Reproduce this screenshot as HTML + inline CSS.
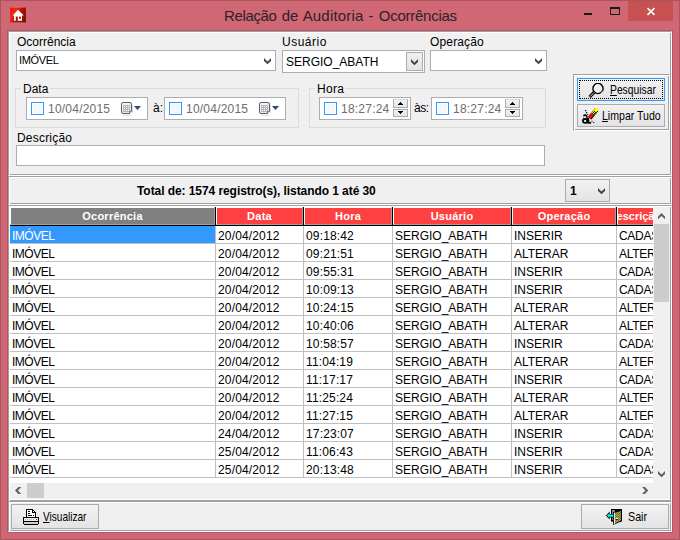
<!DOCTYPE html>
<html lang="pt-BR">
<head>
<meta charset="utf-8">
<title>Relação de Auditoria - Ocorrências</title>
<style>
*{box-sizing:border-box;margin:0;padding:0}
html,body{width:680px;height:540px;overflow:hidden}
body{background:#CF6775;font-family:"Liberation Sans",Arial,sans-serif;font-size:12px;color:#000;position:relative}
.win *{position:absolute}
.title span{position:static}
.win{position:absolute;left:0;top:0;width:680px;height:540px;background:#CF6775;box-shadow:inset 0 0 0 1px #A9545F}
.title{left:224px;top:6px;width:300px;text-align:left;font-size:15px;line-height:20px;color:#2E2226;white-space:nowrap}
.client{left:8px;top:31px;width:664px;height:501px;background:#F0F0F0}
.etch{border:1px solid;border-color:#A0A0A0 #fff #fff #A0A0A0;box-shadow:inset 1px 1px 0 #fff,inset -1px -1px 0 #A0A0A0}
.lbl{font-size:12px;line-height:14px;white-space:nowrap;color:#000}
.combo{background:#fff;border:1px solid #ABADB3;font-size:11px;line-height:18px;white-space:nowrap;letter-spacing:-0.35px}
.combo span{left:2px;top:0}
.grp{border:1px solid #DCDCDC}
.pick{background:#fff;border:1px solid #ABADB3;height:23px}
.pick .cb{left:4px;top:4px;width:13px;height:13px;border:1px solid #3399FF;background:#F3F8FE;box-shadow:inset 0 0 0 1px #fff}
.pick .tx{left:21px;top:3px;font-size:12px;line-height:16px;color:#6D6D6D;white-space:nowrap;letter-spacing:0.22px}
.btn{border:1px solid #ACACAC;background:linear-gradient(#F2F2F2,#E3E3E3);font-size:11px;white-space:nowrap;letter-spacing:-0.45px}
.btn .t{line-height:14px;font-size:12.2px;letter-spacing:0;transform:scaleX(.88);transform-origin:0 50%}
u{position:static!important;text-decoration:underline}
.row{left:0;width:643px;height:18px}
.c{top:0;height:18px;line-height:21px;font-size:12px;white-space:nowrap;overflow:hidden;padding-left:2px;background:#fff;border-right:1px solid #C0C0C0;border-bottom:1px solid #C0C0C0}
.c0{left:0;width:206px;letter-spacing:-0.5px}.c1{left:206px;width:88px;letter-spacing:.15px}.c2{left:294px;width:89px;letter-spacing:.15px}.c3{left:383px;width:119px}.c4{left:502px;width:105px}.c5{left:607px;width:36px;border-right:none;letter-spacing:-.3px}
.sel{background:#3399FF;color:#fff}
.h{top:0;height:18px;line-height:17px;font-size:11px;letter-spacing:.25px;font-weight:bold;color:#fff;text-align:center;background:#FF4040;white-space:nowrap;overflow:hidden;border:1px solid;border-color:#fff #A0A0A0 #A0A0A0 #fff}
.sb{background:#F0F0F0}
.th{background:#CDCDCD}
</style>
</head>
<body>
<div class="win">
  <div style="left:7px;top:30px;width:666px;height:503px;border:1px solid #B35763"></div>
  <!-- title bar -->
  <svg style="left:10px;top:7px" width="16" height="16" viewBox="0 0 16 16">
    <defs><linearGradient id="ig" x1="0" y1="0" x2="1" y2="0.6"><stop offset="0" stop-color="#D81A0C"/><stop offset="0.35" stop-color="#F02A18"/><stop offset="0.6" stop-color="#B01205"/><stop offset="1" stop-color="#861000"/></linearGradient></defs>
    <rect x="0" y="0" width="16" height="16" fill="url(#ig)"/>
    <path d="M0.5 0.5 H15.5 M0.5 15.5 H15.5" stroke="#D9A9A5" stroke-width="1" opacity=".4"/>
    <path d="M8 2.8 L13.8 8.6 L12 8.6 L12 13.8 L4 13.8 L4 8.6 L2.8 8.6 Z" fill="#fff"/>
    <rect x="5.8" y="9.6" width="2" height="4.2" fill="#A01008"/>
    <rect x="9" y="9.6" width="2" height="2.2" fill="#D81810"/>
  </svg>
  <div class="title"><span style="letter-spacing:-.35px">Relação</span> <span style="margin-left:1px">de</span> <span style="letter-spacing:.2px">Auditoria</span> <span style="margin-left:.8px">-</span> <span style="letter-spacing:-.26px;margin-left:1px">Ocorrências</span></div>
  <div style="left:584px;top:13px;width:8px;height:2px;background:#1a1a1a"></div>
  <div style="left:610px;top:7px;width:10px;height:8px;border:1px solid #1a1a1a;border-top-width:2px"></div>
  <div style="left:628px;top:1px;width:45px;height:20px;background:#C75050"></div>
  <svg style="left:646px;top:7px" width="10" height="9" viewBox="0 0 10 9"><path d="M1.5 1.2 L8.5 7.8 M8.5 1.2 L1.5 7.8" stroke="#fff" stroke-width="1.6" fill="none"/></svg>

  <div class="client">
    <!-- top filter panel -->
    <div class="etch" style="left:0;top:0;width:664px;height:145px"></div>

    <div class="lbl" style="left:9px;top:4px">Ocorrência</div>
    <div class="combo" style="left:8px;top:19px;width:260px;height:21px"><span>IMÓVEL</span>
      <svg style="left:247px;top:7px" width="7" height="7" viewBox="0 0 7 7"><path d="M0 0 L3.5 3.4 L7 0 L7 2.9 L3.5 6.3 L0 2.9 Z" fill="#444"/></svg>
    </div>

    <div class="lbl" style="left:274px;top:4px;letter-spacing:.5px">Usuário</div>
    <div class="combo" style="left:274px;top:19px;width:143px;height:23px;line-height:20px"><span style="font-size:12px;letter-spacing:0;left:3px;top:1px">SERGIO_ABATH</span>
      <div style="left:123px;top:1px;width:17px;height:19px;border:1px solid #ACACAC;background:linear-gradient(#F0F0F0,#E5E5E5)"></div>
      <svg style="left:128px;top:8px" width="7" height="7" viewBox="0 0 7 7"><path d="M0 0 L3.5 3.4 L7 0 L7 2.9 L3.5 6.3 L0 2.9 Z" fill="#444"/></svg>
    </div>

    <div class="lbl" style="left:422px;top:4px;letter-spacing:.15px">Operação</div>
    <div class="combo" style="left:422px;top:19px;width:117px;height:21px">
      <svg style="left:104px;top:7px" width="7" height="7" viewBox="0 0 7 7"><path d="M0 0 L3.5 3.4 L7 0 L7 2.9 L3.5 6.3 L0 2.9 Z" fill="#444"/></svg>
    </div>

    <!-- Data group -->
    <div class="grp" style="left:7px;top:57px;width:284px;height:40px"></div>
    <div class="lbl" style="left:13px;top:51px;background:#F0F0F0;padding:0 2px">Data</div>
    <div class="pick" style="left:18px;top:66px;width:122px">
      <div class="cb"></div><div class="tx">10/04/2015</div>
      <svg style="left:94px;top:4px" width="22" height="14" viewBox="0 0 22 14">
        <defs><linearGradient id="cg1" x1="0" y1="0" x2="1" y2="1"><stop offset="0" stop-color="#fff"/><stop offset="1" stop-color="#D5E0F2"/></linearGradient></defs>
        <path d="M2 13.2 H10.5 M11.4 3 V11" stroke="#D8D8D8" stroke-width="1" fill="none"/>
        <path d="M2 0.5 H9 Q10.5 0.5 10.5 2 V9 L8.5 11.5 H2 Q0.5 11.5 0.5 10 V2 Q0.5 0.5 2 0.5 Z" fill="url(#cg1)" stroke="#6B5D5A"/>
        <rect x="2" y="3" width="7" height="7" fill="#B2B6BF"/>
        <path d="M3 4h1v1h-1zM5 4h1v1h-1zM7 4h1v1h-1zM3 6h1v1h-1zM5 6h1v1h-1zM7 6h1v1h-1zM3 8h1v1h-1zM5 8h1v1h-1zM7 8h1v1h-1z" fill="#fff"/>
        <path d="M8.5 11.5 V9.5 H10.5" fill="#EEF3FB" stroke="#6B5D5A" stroke-width="0.8"/>
        <path d="M13 4 L20 4 L16.5 8 Z" fill="#2B4A80"/>
      </svg>
    </div>
    <div class="lbl" style="left:145px;top:70px">à:</div>
    <div class="pick" style="left:156px;top:66px;width:122px">
      <div class="cb"></div><div class="tx">10/04/2015</div>
      <svg style="left:94px;top:4px" width="22" height="14" viewBox="0 0 22 14">
        <defs><linearGradient id="cg2" x1="0" y1="0" x2="1" y2="1"><stop offset="0" stop-color="#fff"/><stop offset="1" stop-color="#D5E0F2"/></linearGradient></defs>
        <path d="M2 13.2 H10.5 M11.4 3 V11" stroke="#D8D8D8" stroke-width="1" fill="none"/>
        <path d="M2 0.5 H9 Q10.5 0.5 10.5 2 V9 L8.5 11.5 H2 Q0.5 11.5 0.5 10 V2 Q0.5 0.5 2 0.5 Z" fill="url(#cg2)" stroke="#6B5D5A"/>
        <rect x="2" y="3" width="7" height="7" fill="#B2B6BF"/>
        <path d="M3 4h1v1h-1zM5 4h1v1h-1zM7 4h1v1h-1zM3 6h1v1h-1zM5 6h1v1h-1zM7 6h1v1h-1zM3 8h1v1h-1zM5 8h1v1h-1zM7 8h1v1h-1z" fill="#fff"/>
        <path d="M8.5 11.5 V9.5 H10.5" fill="#EEF3FB" stroke="#6B5D5A" stroke-width="0.8"/>
        <path d="M13 4 L20 4 L16.5 8 Z" fill="#2B4A80"/>
      </svg>
    </div>

    <!-- Hora group -->
    <div class="grp" style="left:301px;top:57px;width:237px;height:40px"></div>
    <div class="lbl" style="left:307px;top:51px;background:#F0F0F0;padding:0 1px 0 2px;letter-spacing:.3px">Hora</div>
    <div class="pick" style="left:311px;top:66px;width:92px">
      <div class="cb"></div><div class="tx">18:27:24</div>
      <div style="left:73px;top:1px;width:15px;height:9px;border:1px solid #ACACAC;border-top-color:#DADADA;background:linear-gradient(#F2F2F2,#E8E8E8)"></div>
      <div style="left:73px;top:11px;width:15px;height:8px;border:1px solid #ACACAC;background:linear-gradient(#F0F0F0,#E5E5E5)"></div>
      <svg style="left:78px;top:4px" width="5" height="12" viewBox="0 0 5 12" shape-rendering="crispEdges"><path d="M2 0h1v1h-1zM1 1h3v1h-3zM0 2h5v1h-5zM0 9h5v1h-5zM1 10h3v1h-3zM2 11h1v1h-1z" fill="#000"/></svg>
    </div>
    <div class="lbl" style="left:406px;top:70px;letter-spacing:-.4px">às:</div>
    <div class="pick" style="left:423px;top:66px;width:92px">
      <div class="cb"></div><div class="tx">18:27:24</div>
      <div style="left:73px;top:1px;width:15px;height:9px;border:1px solid #ACACAC;border-top-color:#DADADA;background:linear-gradient(#F2F2F2,#E8E8E8)"></div>
      <div style="left:73px;top:11px;width:15px;height:8px;border:1px solid #ACACAC;background:linear-gradient(#F0F0F0,#E5E5E5)"></div>
      <svg style="left:78px;top:4px" width="5" height="12" viewBox="0 0 5 12" shape-rendering="crispEdges"><path d="M2 0h1v1h-1zM1 1h3v1h-3zM0 2h5v1h-5zM0 9h5v1h-5zM1 10h3v1h-3zM2 11h1v1h-1z" fill="#000"/></svg>
    </div>

    <div class="lbl" style="left:9px;top:100px;letter-spacing:.2px">Descrição</div>
    <div class="combo" style="left:8px;top:114px;width:529px;height:21px"></div>

    <!-- buttons panel -->
    <div class="etch" style="left:565px;top:43px;width:97px;height:57px"></div>
    <div class="btn" style="left:569px;top:47px;width:88px;height:23px;border-color:#3399FF">
      <div style="left:1px;top:1px;width:84px;height:19px;border:1px dotted #000"></div>
      <svg style="left:10px;top:4px" width="16" height="16" viewBox="0 0 16 16">
        <circle cx="10" cy="5.5" r="5.1" fill="#EDEDED" stroke="#000" stroke-width="1.4"/>
        <path d="M7 4.5 A3.2 3.2 0 0 1 10 2.2" stroke="#fff" stroke-width="1.3" fill="none"/>
        <path d="M12.5 10.2 A5.4 5.4 0 0 0 15.2 7.5" stroke="#999" stroke-width="1" fill="none"/>
        <path d="M6.3 9.2 L1.6 14" stroke="#000" stroke-width="3.2"/>
        <path d="M6 9.5 L2 13.6" stroke="#fff" stroke-width="0.9"/>
      </svg>
      <div class="t" style="left:32px;top:4px;transform:scaleX(.845)"><u>P</u>esquisar</div>
    </div>
    <div class="btn" style="left:569px;top:73px;width:88px;height:23px">
      <svg style="left:4px;top:3px" width="16" height="16" viewBox="0 0 16 16">
        <path d="M6.2 8.6 L13.4 -0.2 L16.3 -0.3 L16.6 2.6 L9.4 11.4 Z" fill="#000"/>
        <path d="M6.4 8.4 L9.2 4.9 L11.9 7.1 L9 10.6 Z" fill="#F00"/>
        <path d="M9.2 4.9 L13.4 0 L16 0 L16 2.2 L11.9 7.1 Z" fill="#FF0"/>
        <path d="M10 5h1v1h-1zM11 6h1v1h-1zM11 4h1v1h-1zM12 5h1v1h-1zM12 3h1v1h-1zM13 4h1v1h-1zM10.5 3.5h.8v.8h-.8z" fill="#222"/>
        <path d="M6.6 9 L9 11 " stroke="#900" stroke-width="0.8"/>
        <ellipse cx="3.4" cy="12.8" rx="3.4" ry="2.9" fill="#000"/>
        <ellipse cx="3.1" cy="13" rx="1.3" ry="1.1" fill="#F4F4F4"/>
        <path d="M4.8 9.6 L7 9.4 L7.4 13.8 L9.2 14.2 L9 15.8 L5.8 15.8 L5 14 Z" fill="#000"/>
        <path d="M1 7.6 C1.5 6 4.5 5.8 5 7 L5.8 9.6 L4.2 9.8 L3.8 8.2 C3 7.6 2.2 8 2 8.8 Z" fill="#000"/>
        <path d="M3 2h1.2v1.2h-1.2zM4 4h1.2v1.2h-1.2zM5.2 6h1v1h-1zM9.5 12.8h1v1h-1zM11.2 14h1.1v1.1h-1.1zM1.2 9.5h.9v.9h-.9z" fill="#000"/>
      </svg>
      <div class="t" style="left:24px;top:4px;transform:scaleX(.866)"><u>L</u>impar Tudo</div>
    </div>

    <!-- count panel -->
    <div class="etch" style="left:0;top:145px;width:664px;height:29px"></div>
    <div class="lbl" style="left:129px;top:153px;font-weight:bold;letter-spacing:-0.07px">Total de: 1574 registro(s), listando 1 até 30</div>
    <div class="btn" style="left:557px;top:148px;width:45px;height:23px">
      <div class="t" style="left:4px;top:4px;font-weight:bold;font-size:12px;transform:none">1</div>
      <svg style="left:32px;top:8px" width="7" height="7" viewBox="0 0 7 7"><path d="M0 0 L3.5 3.4 L7 0 L7 2.9 L3.5 6.3 L0 2.9 Z" fill="#444"/></svg>
    </div>

    <!-- grid panel -->
    <div class="etch" style="left:0;top:174px;width:664px;height:297px;background:#fff"></div>
    <div style="left:2px;top:176px;width:643px;height:275px;background:#fff;overflow:hidden">
      <div style="left:0;top:0;width:643px;height:19px;background:#000"></div>
      <div class="h" style="left:0;width:205px;background:#808080">Ocorrência</div>
      <div class="h" style="left:206px;width:87px">Data</div>
      <div class="h" style="left:294px;width:88px">Hora</div>
      <div class="h" style="left:383px;width:118px">Usuário</div>
      <div class="h" style="left:502px;width:104px">Operação</div>
      <div class="h" style="left:607px;width:40px;text-align:left;text-indent:-9.4px;letter-spacing:0">Descrição</div>
<div class="row" style="top:19px"><span class="c c0 sel">IMÓVEL</span><span class="c c1">20/04/2012</span><span class="c c2">09:18:42</span><span class="c c3">SERGIO_ABATH</span><span class="c c4">INSERIR</span><span class="c c5">CADAS</span></div>
<div class="row" style="top:37px"><span class="c c0">IMÓVEL</span><span class="c c1">20/04/2012</span><span class="c c2">09:21:51</span><span class="c c3">SERGIO_ABATH</span><span class="c c4">ALTERAR</span><span class="c c5">ALTER</span></div>
<div class="row" style="top:55px"><span class="c c0">IMÓVEL</span><span class="c c1">20/04/2012</span><span class="c c2">09:55:31</span><span class="c c3">SERGIO_ABATH</span><span class="c c4">INSERIR</span><span class="c c5">CADAS</span></div>
<div class="row" style="top:73px"><span class="c c0">IMÓVEL</span><span class="c c1">20/04/2012</span><span class="c c2">10:09:13</span><span class="c c3">SERGIO_ABATH</span><span class="c c4">INSERIR</span><span class="c c5">CADAS</span></div>
<div class="row" style="top:91px"><span class="c c0">IMÓVEL</span><span class="c c1">20/04/2012</span><span class="c c2">10:24:15</span><span class="c c3">SERGIO_ABATH</span><span class="c c4">ALTERAR</span><span class="c c5">ALTER</span></div>
<div class="row" style="top:109px"><span class="c c0">IMÓVEL</span><span class="c c1">20/04/2012</span><span class="c c2">10:40:06</span><span class="c c3">SERGIO_ABATH</span><span class="c c4">ALTERAR</span><span class="c c5">ALTER</span></div>
<div class="row" style="top:127px"><span class="c c0">IMÓVEL</span><span class="c c1">20/04/2012</span><span class="c c2">10:58:57</span><span class="c c3">SERGIO_ABATH</span><span class="c c4">INSERIR</span><span class="c c5">CADAS</span></div>
<div class="row" style="top:145px"><span class="c c0">IMÓVEL</span><span class="c c1">20/04/2012</span><span class="c c2">11:04:19</span><span class="c c3">SERGIO_ABATH</span><span class="c c4">ALTERAR</span><span class="c c5">ALTER</span></div>
<div class="row" style="top:163px"><span class="c c0">IMÓVEL</span><span class="c c1">20/04/2012</span><span class="c c2">11:17:17</span><span class="c c3">SERGIO_ABATH</span><span class="c c4">INSERIR</span><span class="c c5">CADAS</span></div>
<div class="row" style="top:181px"><span class="c c0">IMÓVEL</span><span class="c c1">20/04/2012</span><span class="c c2">11:25:24</span><span class="c c3">SERGIO_ABATH</span><span class="c c4">ALTERAR</span><span class="c c5">ALTER</span></div>
<div class="row" style="top:199px"><span class="c c0">IMÓVEL</span><span class="c c1">20/04/2012</span><span class="c c2">11:27:15</span><span class="c c3">SERGIO_ABATH</span><span class="c c4">ALTERAR</span><span class="c c5">ALTER</span></div>
<div class="row" style="top:217px"><span class="c c0">IMÓVEL</span><span class="c c1">24/04/2012</span><span class="c c2">17:23:07</span><span class="c c3">SERGIO_ABATH</span><span class="c c4">INSERIR</span><span class="c c5">CADAS</span></div>
<div class="row" style="top:235px"><span class="c c0">IMÓVEL</span><span class="c c1">25/04/2012</span><span class="c c2">11:06:43</span><span class="c c3">SERGIO_ABATH</span><span class="c c4">INSERIR</span><span class="c c5">CADAS</span></div>
<div class="row" style="top:253px"><span class="c c0">IMÓVEL</span><span class="c c1">25/04/2012</span><span class="c c2">20:13:48</span><span class="c c3">SERGIO_ABATH</span><span class="c c4">INSERIR</span><span class="c c5">CADAS</span></div>
    </div>
    <!-- v scrollbar -->
    <div class="sb" style="left:645px;top:176px;width:17px;height:276px"></div>
    <svg style="left:650px;top:182px" width="7" height="7" viewBox="0 0 7 7"><path d="M0 6.3 L3.5 2.9 L7 6.3 L7 3.4 L3.5 0 L0 3.4 Z" fill="#606060"/></svg>
    <div class="th" style="left:646px;top:193px;width:15px;height:78px"></div>
    <svg style="left:650px;top:440px" width="7" height="7" viewBox="0 0 7 7"><path d="M0 0 L3.5 3.4 L7 0 L7 2.9 L3.5 6.3 L0 2.9 Z" fill="#606060"/></svg>
    <!-- h scrollbar -->
    <div class="sb" style="left:2px;top:452px;width:660px;height:16px"></div>
    <svg style="left:7px;top:456px" width="7" height="7" viewBox="0 0 7 7"><path d="M6.3 0 L2.9 3.5 L6.3 7 L3.4 7 L0 3.5 L3.4 0 Z" fill="#606060"/></svg>
    <div class="th" style="left:19px;top:452px;width:17px;height:15px"></div>
    <svg style="left:634px;top:456px" width="7" height="7" viewBox="0 0 7 7"><path d="M0 0 L3.4 3.5 L0 7 L2.9 7 L6.3 3.5 L2.9 0 Z" fill="#606060"/></svg>

    <!-- bottom panel -->
    <div class="etch" style="left:0;top:470px;width:664px;height:31px;background:#F0F0F0"></div>
    <div class="btn" style="left:3px;top:473px;width:88px;height:25px">
      <svg style="left:11px;top:4px" width="16" height="16" viewBox="0 0 16 16" shape-rendering="crispEdges">
        <path d="M3 0 H9 L13 4 V9 H3 Z" fill="#000"/>
        <path d="M4 1 H9 L12 4 V8 H4 Z" fill="#fff"/>
        <path d="M9 1h1v3h-1zM9 3h3v1h-3zM5 2h2v1h-2zM5 4h2v1h-2zM5 6h4v1h-4zM10 6h1v1h-1z" fill="#000"/>
        <rect x="0" y="8" width="16" height="7" fill="#000"/>
        <rect x="1" y="9" width="14" height="3" fill="#EDEDED"/>
        <path d="M2 10h1v1h-1zM4 10h1v1h-1zM6 10h1v1h-1zM8 10h1v1h-1zM10 10h1v1h-1z" fill="#B8B8B8"/>
        <rect x="13" y="10" width="1" height="1" fill="#F00"/>
        <rect x="1" y="13" width="14" height="2" fill="#D0D0D0"/>
        <rect x="1" y="15" width="14" height="1" fill="#000"/>
      </svg>
      <div class="t" style="left:31px;top:5px;transform:scaleX(.825)"><u>V</u>isualizar</div>
    </div>
    <div class="btn" style="left:573px;top:473px;width:88px;height:25px">
      <svg style="left:24px;top:4px" width="16" height="16" viewBox="0 0 16 16">
        <defs><pattern id="dp" width="2" height="2" patternUnits="userSpaceOnUse"><rect width="2" height="2" fill="#808000"/><rect width="1" height="1" fill="#A0A088"/><rect x="1" y="1" width="1" height="1" fill="#A0A088"/></pattern></defs>
        <rect x="5" y="0" width="11" height="12.6" fill="#000"/>
        <rect x="6" y="1" width="3" height="10" fill="#787878"/>
        <rect x="6.6" y="1.6" width="1.6" height="2" fill="#A8A8A8"/>
        <path d="M7 3 L15 0.9 L15 12.4 L7 16 Z" fill="#000"/>
        <path d="M8.9 3.7 L14.9 2 L14.9 11.5 L8.9 14.6 Z" fill="url(#dp)"/>
        <rect x="7.9" y="3.6" width="1" height="11.4" fill="#fff"/>
        <rect x="10" y="9" width="2" height="1" fill="#fff"/>
        <rect x="10" y="10" width="2" height="0.8" fill="#000"/>
        <path d="M-0.2 6.6 L3.6 2.6 V4.9 H7.4 V8.4 H3.6 V10.6 Z" fill="#000"/>
        <path d="M0.9 6.6 L3 4.4 V5.6 H7.4 V7.7 H3 V8.8 Z" fill="#00F0F8"/>
      </svg>
      <div class="t" style="left:46px;top:5px">Sair</div>
    </div>
  </div>
</div>
</body>
</html>
